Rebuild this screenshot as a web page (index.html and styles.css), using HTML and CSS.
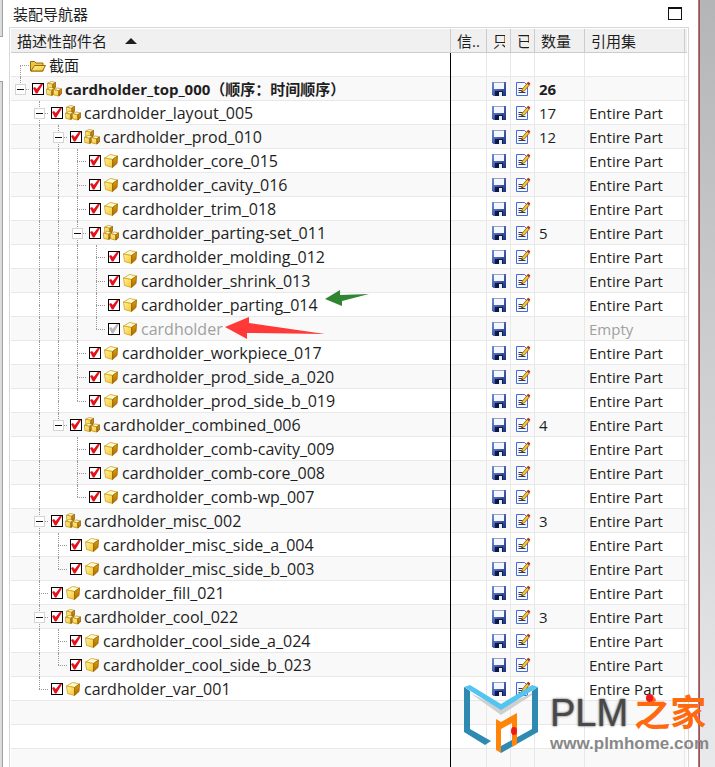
FILE: index.html
```html
<!DOCTYPE html>
<html lang="zh-CN">
<head>
  <meta charset="UTF-8" />
  <meta name="viewport" content="width=device-width, initial-scale=1.0" />
  <title>装配导航器</title>
  <link rel="stylesheet" href="styles.css">
</head>
<body>
  <!-- icons -->
  <svg class="sprite" aria-hidden="true">
    <defs>
      <linearGradient id="goldSide" x1="0" y1="0" x2="0" y2="1">
        <stop offset="0" stop-color="#e0a010" />
        <stop offset="1" stop-color="#a86800" />
      </linearGradient>
      <linearGradient id="goldFront" x1="0" y1="0" x2="1" y2="1">
        <stop offset="0" stop-color="#fff3a0" />
        <stop offset="1" stop-color="#f5c52c" />
      </linearGradient>
      <linearGradient id="floppyBlue" x1="0" y1="0" x2="1" y2="1">
        <stop offset="0" stop-color="#6f8fd8" />
        <stop offset="1" stop-color="#1b2f80" />
      </linearGradient>
    </defs>
    <symbol id="part" viewBox="0 0 16 16">
      <path d="M1.500 5 7.500 1.500l7 1.500L9.500 6.500z" fill="#fffbd0" stroke="#d0a020" stroke-width=".8" />
      <path d="M1.500 5 9.500 6.500v8L2.500 12.500z" fill="url(#goldFront)" stroke="#d0a020" stroke-width=".8" />
      <path d="M9.500 6.500l5-3.500-.5 7.500L9.500 14.500z" fill="url(#goldSide)" stroke="#9a6500" stroke-width=".8" />
    </symbol>
    <symbol id="cube" viewBox="0 0 8 8">
      <path d="M.4 2 3.800.4l3.800.9L5.200 2.900z" fill="#fffbd0" stroke="#b88810" stroke-width=".6" />
      <path d="M.4 2 5.200 2.900v4.700L.7 6.600z" fill="url(#goldFront)" stroke="#b88810" stroke-width=".6" />
      <path d="M5.200 2.900l2.400-1.600v4.300L5.200 7.600z" fill="url(#goldSide)" stroke="#805200" stroke-width=".6" />
    </symbol>
    <symbol id="assembly" viewBox="0 0 16 16">
      <use href="#cube" x="1" y="0" width="9" height="9" />
      <use href="#cube" x="0" y="6" width="9" height="9" />
      <use href="#cube" x="7" y="6" width="9" height="10" />
    </symbol>
    <symbol id="folder" viewBox="0 0 16 16">
      <path d="M.5 14V4.500h4l1.500 1.500h7V14z" fill="#f0c545" stroke="#9a6a08" />
      <path d="M1 14 4.500 8.500h11L12.500 14z" fill="url(#goldFront)" stroke="#9a6a08" />
    </symbol>
    <symbol id="save" viewBox="0 0 14 14">
      <path d="M0 0h14v14H1.500L0 12.500z" fill="url(#floppyBlue)" />
      <path d="M2 0h10v7H2z" fill="#f4f7ff" />
      <path d="M2 0h10v1H2z" fill="#9aa6c8" />
      <path d="M3 9h8v5H3z" fill="#0c1846" />
      <path d="M7 10h3v4H7z" fill="#e8ecf4" />
    </symbol>
    <symbol id="modified" viewBox="0 0 16 16">
      <path d="M1.500 1.500h8l3 3v10h-11z" fill="#f4f8ff" stroke="#4a68d8" />
      <path d="M3.500 7.500h4M3.500 9.500h4M3.500 11.500h7" stroke="#333b55" />
      <path d="M6.500 11l1-3 5-6 2 1.800-5 6z" fill="#f8c830" stroke="#8a5a10" stroke-width=".8" />
      <path d="M11.800 2.400l1.400-1.600 2.200 1.800L14 4.200z" fill="#c02818" />
      <path d="M6.300 11.500l.6-1.700 1.100 1z" fill="#222" />
    </symbol>
  </svg>

  <div class="left-dock"><span class="dock-tab"></span><span class="dock-pane"></span></div>

  <main class="navigator">
    <header class="titlebar">
      <h1>装配导航器</h1>
      <button class="maximize" type="button" aria-label="最大化"></button>
    </header>

    <div class="tree-frame">
      <table class="tree">
        <colgroup>
          <col class="col-name"><col class="col-info"><col class="col-flag"><col class="col-flag">
          <col class="col-count"><col class="col-ref"><col class="col-end">
        </colgroup>
        <thead>
          <tr>
            <th>描述性部件名 <span class="sort-up"></span></th>
            <th>信..</th>
            <th><span class="clip">只</span></th>
            <th><span class="clip">已</span></th>
            <th>数量</th>
            <th>引用集</th>
            <th></th>
          </tr>
        </thead>
        <tbody id="rows"></tbody>
      </table>
    </div>
  </main>

  <div class="right-dock"></div>

  <svg class="arrow arrow-green" viewBox="0 0 44 16" aria-hidden="true">
    <path d="M0 9 15 0v5L44 4 17 11v5z" fill="#2f8530" />
  </svg>
  <svg class="arrow arrow-red" viewBox="0 0 100 22" aria-hidden="true">
    <path d="M0 10 24 0v6L100 17 22 16v6z" fill="#ff3838" />
  </svg>

  <div class="watermark">
    <svg class="logo" viewBox="0 0 74 68" aria-hidden="true">
      <path d="M6 8l31 15L68 8v2L37 30z" fill="#cfcfcf" />
      <path d="M0 2l6 4v38l21 12-6 4L0 47z" fill="#2f8ab2" />
      <path d="M74 2l-6 4v38L37 61v7l37-21z" fill="#2f8ab2" />
      <path d="M0 2l6-2 31 19L68 0l6 2-37 23z" fill="#55c4f0" />
      <path d="M32 34l5 3 16-9v31l-5 3V38l-11 6v24l-5-3z" fill="#ff8408" />
      <ellipse cx="50" cy="46" rx="3" ry="4" fill="#f01818" />
    </svg>
    <div class="brand">
      <div class="brand-name"><b>PLM</b><span class="brand-home">之家</span></div>
      <div class="brand-url">www.plmhome.com</div>
    </div>
  </div>

  <script>
    // [level, name, count, reference set]
    const parts = [
      [0, "cardholder_top_000（顺序：时间顺序）", 26, ""],
      [1, "cardholder_layout_005", 17, "Entire Part"],
      [2, "cardholder_prod_010", 12, "Entire Part"],
      [3, "cardholder_core_015", "", "Entire Part"],
      [3, "cardholder_cavity_016", "", "Entire Part"],
      [3, "cardholder_trim_018", "", "Entire Part"],
      [3, "cardholder_parting-set_011", 5, "Entire Part"],
      [4, "cardholder_molding_012", "", "Entire Part"],
      [4, "cardholder_shrink_013", "", "Entire Part"],
      [4, "cardholder_parting_014", "", "Entire Part"],
      [4, "cardholder", "", "Empty"],
      [3, "cardholder_workpiece_017", "", "Entire Part"],
      [3, "cardholder_prod_side_a_020", "", "Entire Part"],
      [3, "cardholder_prod_side_b_019", "", "Entire Part"],
      [2, "cardholder_combined_006", 4, "Entire Part"],
      [3, "cardholder_comb-cavity_009", "", "Entire Part"],
      [3, "cardholder_comb-core_008", "", "Entire Part"],
      [3, "cardholder_comb-wp_007", "", "Entire Part"],
      [1, "cardholder_misc_002", 3, "Entire Part"],
      [2, "cardholder_misc_side_a_004", "", "Entire Part"],
      [2, "cardholder_misc_side_b_003", "", "Entire Part"],
      [1, "cardholder_fill_021", "", "Entire Part"],
      [1, "cardholder_cool_022", 3, "Entire Part"],
      [2, "cardholder_cool_side_a_024", "", "Entire Part"],
      [2, "cardholder_cool_side_b_023", "", "Entire Part"],
      [1, "cardholder_var_001", "", "Entire Part"]
    ];

    const icon = (name) => `<svg class="icon icon-${name}" aria-hidden="true"><use href="#${name}"/></svg>`;

    // true when another node of this level follows under the same parent
    function continues(index, level) {
      for (let i = index + 1; i < parts.length; i++) {
        if (parts[i][0] < level) return false;
        if (parts[i][0] === level) return true;
      }
      return false;
    }

    function row(cls, name, cells) {
      return `<tr class="${cls}"><td><div class="node">${name}</div></td>` +
        cells.map(c => `<td>${c}</td>`).join("") + "<td></td></tr>";
    }

    let html = row("", `<span class="guide down stub"></span>${icon("folder")}<span class="label">截面</span>`, ["", "", "", "", ""]);

    parts.forEach(([level, name, count, ref], i) => {
      let node = "";
      for (let l = 0; l < level; l++) {
        node += `<span class="guide ${l > 0 && continues(i, l) ? "up down" : ""}"></span>`;
      }
      node += `<span class="guide up stub ${continues(i, level) ? "down" : ""}">` +
        (count ? `<button class="toggle" type="button" aria-label="折叠"></button>` : "") + "</span>";
      node += `<input type="checkbox" id="part${i}" checked>` + icon(count ? "assembly" : "part") +
        `<label class="label part-name" for="part${i}">${name}</label>`;
      const empty = ref === "Empty";
      const cls = level === 0 ? "root" : empty ? "unloaded" : "";
      html += row(cls, node, ["", icon("save"), empty ? "" : icon("modified"), count, ref]);
    });

    for (let i = 0; i < 3; i++) html += row("", "", ["", "", "", "", ""]);
    document.getElementById("rows").innerHTML = html;
  </script>
</body>
</html>
```

FILE: styles.css
```css
* { box-sizing: border-box; }
body { margin: 0; height: 100vh; display: flex; overflow: hidden; position: relative; background: #fff; color: #1e1e1e; font: 15px/20px "Open Sans", "Noto Sans CJK SC", sans-serif; }
.sprite { position: absolute; width: 0; height: 0; }

.left-dock { width: 3px; display: flex; flex-direction: column; gap: 44px; }
.dock-tab, .dock-pane { background: #dcdcdc; border: solid #a0a0a0; border-width: 0 1px 1px 0; }
.dock-tab { height: 37px; }
.dock-pane { flex: 1; border-width: 1px 1px 0 0; }
.right-dock { width: 17px; border-left: 1px solid #8088a0; box-shadow: inset 1px 0 #d03c38; background: linear-gradient(#b4b5b7, #e9eaec); }

.navigator { flex: 1; min-width: 0; display: flex; flex-direction: column; }
.titlebar { height: 27px; display: flex; align-items: center; justify-content: space-between; padding: 0 16px 0 10px; }
.titlebar h1 { margin: 0; font-size: 15px; font-weight: 400; }
.maximize { width: 14px; height: 13px; padding: 0; background: #fff; border: 1px solid #111; border-top-width: 2px; }

.tree-frame { flex: 1; min-height: 0; overflow: hidden; margin: 0 9px 0 6px; padding: 1px 1px 0; border: 1px solid #d8d8d8; border-bottom: 0; }
.tree { width: 100%; table-layout: fixed; border-collapse: separate; border-spacing: 0; }
.col-info { width: 36px; }
.col-flag { width: 24px; }
.col-count { width: 50px; }
.col-ref { width: 100px; }
.col-end { width: 2px; }

th { height: 24px; padding: 0 0 0 6px; background: #f0f0f0; border-right: 1px solid #ccc; border-bottom: 1px solid #ccc; font-weight: 400; text-align: left; white-space: nowrap; overflow: hidden; }
.clip { display: block; width: 12px; overflow: hidden; }
.sort-up { display: inline-block; margin-left: 14px; border: solid transparent; border-width: 0 6px 6px; border-bottom-color: #1e1e1e; vertical-align: 3px; }

/* row lines are painted as a background so the black divider stays unbroken */
td { height: 24px; padding: 0 0 1px 4px; border-right: 1px solid #e8e8e8; background: linear-gradient(#e8e8e8, #e8e8e8) bottom / 100% 1px no-repeat; white-space: nowrap; }
td:first-child { padding: 0 0 1px; border-right-color: #000; }
th:last-child, td:last-child { padding: 0; border-right: 0; }
tbody tr:nth-child(even) { background: #f9f9f9; }

.node { height: 23px; display: flex; align-items: center; }
.label { margin-left: 3px; }
.part-name { font-size: 16px; }
.root { font-weight: 700; }
.root .part-name { font-size: 15px; }
.unloaded { color: #a0a0a0; }

.guide { position: relative; width: 19px; height: 24px; flex: none; }
.guide.up::before, .guide.down::after { content: ""; position: absolute; left: 9px; height: 12px; border-left: 1px dotted #999; }
.guide.up::before { top: 0; }
.guide.down::after { top: 12px; }
.guide.stub { background: repeating-linear-gradient(90deg, #999 0 1px, transparent 1px 2px) 9px 12px / 10px 1px no-repeat; }
.toggle { position: absolute; z-index: 1; left: 4px; top: 7px; width: 11px; height: 11px; padding: 0; border: 1px solid #d4d4d4; background: linear-gradient(#111, #111) center / 7px 1px no-repeat #fff; }

input[type="checkbox"] { appearance: none; width: 12px; height: 12px; margin: 0 2px; border: 1px solid #000; background: #fff; flex: none; }
input[type="checkbox"]:checked::before { content: ""; display: block; width: 10px; height: 10px; background: #e8101c; clip-path: polygon(0 45%, 20% 36%, 38% 54%, 82% 0, 100% 8%, 44% 100%, 28% 100%); }
.unloaded input[type="checkbox"]:checked::before { background: #b8b8b8; }

.icon { display: block; width: 16px; height: 16px; flex: none; }
.icon-save { width: 14px; height: 14px; margin-left: 1px; }

.arrow { position: absolute; }
.arrow-green { left: 325px; top: 290px; width: 44px; height: 16px; }
.arrow-red { left: 225px; top: 317px; width: 100px; height: 22px; }

.watermark { position: absolute; right: 6px; bottom: 14px; display: flex; gap: 12px; }
.logo { width: 74px; height: 68px; }
.brand { width: 159px; padding-top: 6px; }
.brand-name { height: 44px; display: flex; align-items: center; gap: 6px; }
.brand-name b { font: 400 38px/42px "Liberation Sans", sans-serif; color: #484848; text-shadow: 0 0 3px #999, 0 0 2px #aaa, 0 0 1px #484848; }
.brand-home { position: relative; font-size: 36px; font-weight: 700; line-height: 42px; color: #ff6a10; }
.brand-home::before { content: ""; position: absolute; left: 12px; top: 2px; width: 7px; height: 8px; border-radius: 50%; background: #f01818; }
.brand-url { font: 700 17px/18px "Liberation Sans", sans-serif; color: #888; }
```
